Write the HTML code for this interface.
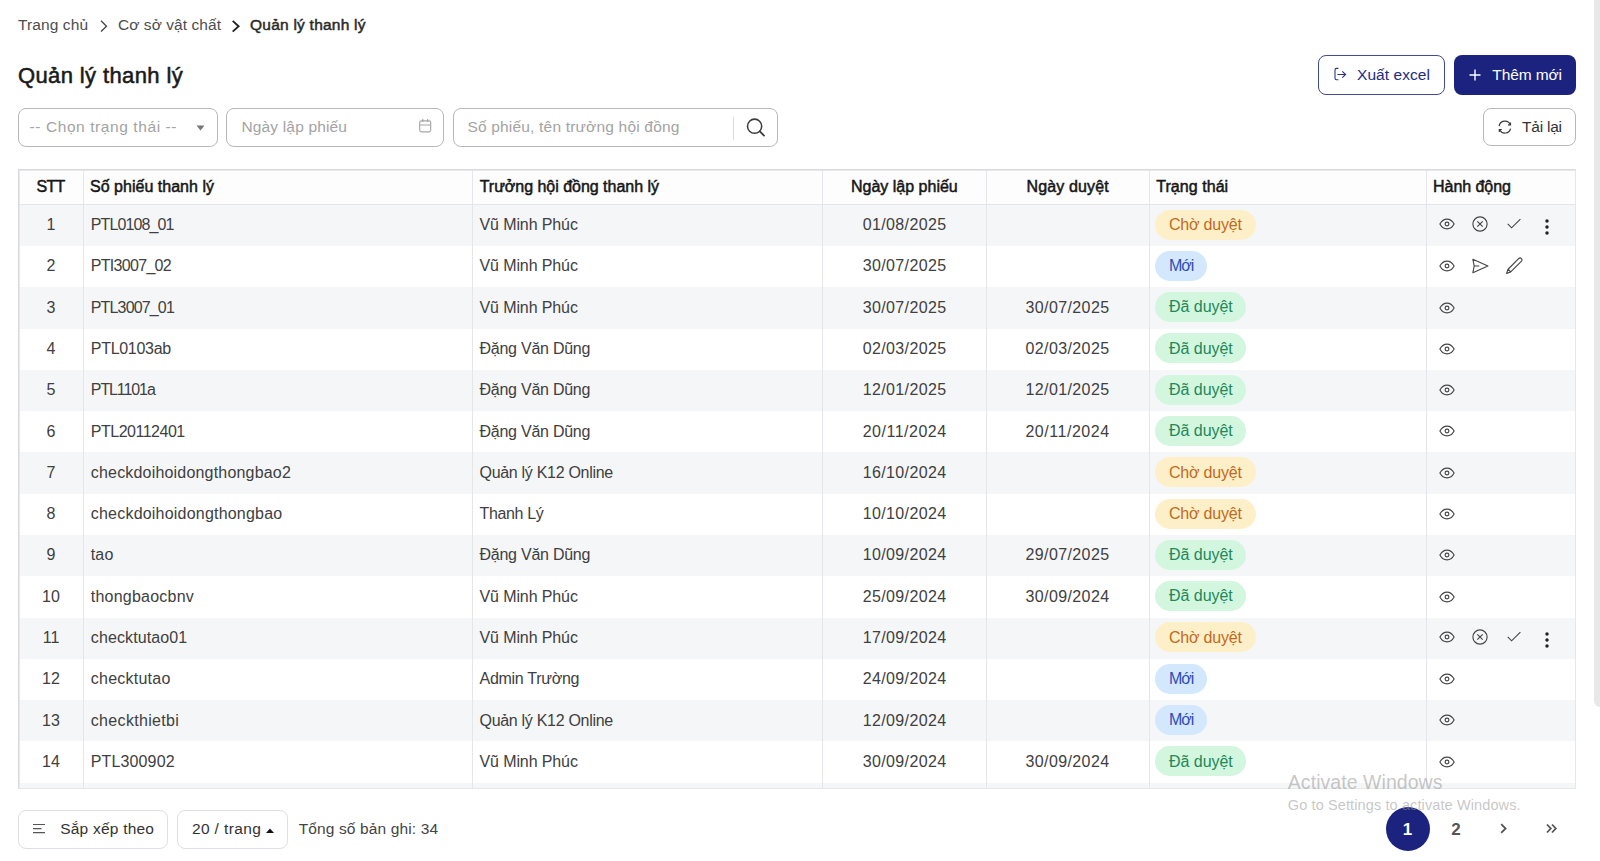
<!DOCTYPE html>
<html><head><meta charset="utf-8">
<style>
*{box-sizing:border-box;margin:0;padding:0}
html,body{width:1600px;height:861px;overflow:hidden;background:#fff;font-family:"Liberation Sans",sans-serif;color:#333}
.t{position:absolute;white-space:nowrap;line-height:1}
.btn{position:absolute;border-radius:8px}
.inp{position:absolute;top:108px;height:39px;border:1px solid #b8b8b8;border-radius:8px}
.ic{position:absolute}
.badge{position:absolute;height:30px;border-radius:15px}
</style></head><body>

<div class="t" style="left:18.00px;top:17.48px;font-size:15.5px;color:#4d4d4d;font-weight:normal;letter-spacing:0.100px;">Trang chủ</div>
<svg class="ic" style="left:99px;top:19px" width="10" height="14" viewBox="0 0 10 14"><path d="M2 1.8L7.5 7.3L2 12.4" fill="none" stroke="#444" stroke-width="1.3"/></svg>
<div class="t" style="left:118.00px;top:17.48px;font-size:15.5px;color:#4d4d4d;font-weight:normal;letter-spacing:0.065px;">Cơ sở vật chất</div>
<svg class="ic" style="left:230px;top:19px" width="11" height="14" viewBox="0 0 11 14"><path d="M2.7 1.9L8.6 7.3L2.7 12.6" fill="none" stroke="#222" stroke-width="1.9"/></svg>
<div class="t" style="left:250.00px;top:17.48px;font-size:15.5px;color:#2a2a2a;font-weight:normal;letter-spacing:0.233px;-webkit-text-stroke:0.5px #2a2a2a;">Quản lý thanh lý</div>
<div class="t" style="left:18.00px;top:64.88px;font-size:22px;color:#1a1a1a;font-weight:normal;letter-spacing:0.380px;-webkit-text-stroke:0.55px #1a1a1a;">Quản lý thanh lý</div>
<div class="btn" style="left:1318px;top:55px;width:127px;height:40px;border:1.3px solid #404a96"></div>
<svg class="ic" style="left:1330px;top:64px" width="20" height="20" viewBox="0 0 20 20"><path d="M8.4 4.4H6.6Q5 4.4 5 6V14.2Q5 15.8 6.6 15.8H8.4" fill="none" stroke="#2a3585" stroke-width="1.1"/><path d="M7.4 10.5H15.4M12.3 7.3L15.6 10.5L12.3 13.7" fill="none" stroke="#2a3585" stroke-width="1.1"/></svg>
<div class="t" style="left:1357.00px;top:66.68px;font-size:15.5px;color:#222b7d;font-weight:normal;letter-spacing:0.067px;">Xuất excel</div>
<div class="btn" style="left:1454px;top:55px;width:122px;height:40px;background:#1b237e"></div>
<svg class="ic" style="left:1469px;top:69px" width="12" height="12" viewBox="0 0 12 12"><path d="M6 0.5V11.5M0.5 6H11.5" stroke="#fff" stroke-width="1.4"/></svg>
<div class="t" style="left:1492.30px;top:66.68px;font-size:15.5px;color:#fff;font-weight:normal;letter-spacing:-0.107px;">Thêm mới</div>
<div class="inp" style="left:18px;width:200px"></div>
<div class="t" style="left:29.50px;top:119.48px;font-size:15.5px;color:#a3a3a3;font-weight:normal;letter-spacing:0.588px;">-- Chọn trạng thái --</div>
<svg class="ic" style="left:196px;top:125px" width="9" height="6" viewBox="0 0 9 6"><path d="M0.5 0.5H8.5L4.5 5.5Z" fill="#777"/></svg>
<div class="inp" style="left:226px;width:218px"></div>
<div class="t" style="left:241.40px;top:119.48px;font-size:15.5px;color:#a3a3a3;font-weight:normal;letter-spacing:0.169px;">Ngày lập phiếu</div>
<svg class="ic" style="left:418px;top:118px" width="14" height="15" viewBox="0 0 14 15"><rect x="1.7" y="2.8" width="11" height="11.1" rx="1.8" fill="none" stroke="#a6a6a6" stroke-width="1.15"/><path d="M1.7 7H12.7M4.8 1V4M9.6 1V4" stroke="#a6a6a6" stroke-width="1.15"/></svg>
<div class="inp" style="left:453px;width:325px"></div>
<div class="t" style="left:467.40px;top:119.48px;font-size:15.5px;color:#a3a3a3;font-weight:normal;letter-spacing:0.189px;">Số phiếu, tên trưởng hội đồng</div>
<div style="position:absolute;left:733px;top:117px;width:1px;height:23px;background:#d9dce4"></div>
<svg class="ic" style="left:745px;top:117px" width="22" height="22" viewBox="0 0 22 22"><circle cx="9.6" cy="9.2" r="7.1" fill="none" stroke="#3d3d3d" stroke-width="1.55"/><path d="M14.8 14.4L19 18.6" stroke="#3d3d3d" stroke-width="1.8" stroke-linecap="round"/></svg>
<div class="btn" style="left:1483px;top:108px;width:93px;height:38px;border:1px solid #b8b8b8"></div>
<svg class="ic" style="left:1494px;top:117px" width="22" height="20" viewBox="0 0 22 20"><path d="M5.1 9.2A5.9 5.9 0 0 1 16.3 7.6" fill="none" stroke="#3a3a3a" stroke-width="1.2"/><path d="M16.6 11.6A5.9 5.9 0 0 1 5.6 12.8" fill="none" stroke="#3a3a3a" stroke-width="1.2"/><path d="M16.5 5.4V7.9H14" fill="none" stroke="#3a3a3a" stroke-width="1.2"/><path d="M5.3 15V12.5H7.8" fill="none" stroke="#3a3a3a" stroke-width="1.2"/></svg>
<div class="t" style="left:1522.00px;top:119.08px;font-size:15.5px;color:#333;font-weight:normal;letter-spacing:-0.225px;">Tải lại</div>
<div style="position:absolute;left:18px;top:169px;width:1558px;height:620px;border:1px solid #e6e7ec;border-top-color:#d9d9db;border-left-color:#d9d9db;background:#fff;overflow:hidden">
<div style="position:absolute;left:0;top:0;width:1556px;height:34px;background:#fdfdfe"></div>
<div style="position:absolute;left:0;top:0;width:1556px;height:1px;background:#e6e8ec"></div>
<div style="position:absolute;left:0;top:34.700px;width:1556px;height:41.290px;background:#f5f6f8"></div>
<div style="position:absolute;left:0;top:117.280px;width:1556px;height:41.290px;background:#f5f6f8"></div>
<div style="position:absolute;left:0;top:199.860px;width:1556px;height:41.290px;background:#f5f6f8"></div>
<div style="position:absolute;left:0;top:282.440px;width:1556px;height:41.290px;background:#f5f6f8"></div>
<div style="position:absolute;left:0;top:365.020px;width:1556px;height:41.290px;background:#f5f6f8"></div>
<div style="position:absolute;left:0;top:447.600px;width:1556px;height:41.290px;background:#f5f6f8"></div>
<div style="position:absolute;left:0;top:530.180px;width:1556px;height:41.290px;background:#f5f6f8"></div>
<div style="position:absolute;left:0;top:612.760px;width:1556px;height:41.290px;background:#f5f6f8"></div>
<div style="position:absolute;left:0;top:34px;width:1556px;height:1px;background:#e4e6eb"></div>
<div style="position:absolute;left:0;top:0;width:1px;height:620px;background:#e6e8ec"></div>
<div style="position:absolute;left:64px;top:0;width:1px;height:620px;background:#e4e6eb"></div>
<div style="position:absolute;left:453px;top:0;width:1px;height:620px;background:#e4e6eb"></div>
<div style="position:absolute;left:803px;top:0;width:1px;height:620px;background:#e4e6eb"></div>
<div style="position:absolute;left:967px;top:0;width:1px;height:620px;background:#e4e6eb"></div>
<div style="position:absolute;left:1130px;top:0;width:1px;height:620px;background:#e4e6eb"></div>
<div style="position:absolute;left:1407px;top:0;width:1px;height:620px;background:#e4e6eb"></div>
</div>
<div class="t" style="left:36.50px;top:178.86px;font-size:16px;color:#161616;font-weight:normal;letter-spacing:-0.750px;-webkit-text-stroke:0.5px #161616;">STT</div>
<div class="t" style="left:90.00px;top:178.86px;font-size:16px;color:#161616;font-weight:normal;letter-spacing:0.022px;-webkit-text-stroke:0.5px #161616;">Số phiếu thanh lý</div>
<div class="t" style="left:479.70px;top:178.86px;font-size:16px;color:#161616;font-weight:normal;letter-spacing:-0.024px;-webkit-text-stroke:0.5px #161616;">Trưởng hội đồng thanh lý</div>
<div class="t" style="left:851.00px;top:178.86px;font-size:16px;color:#161616;font-weight:normal;letter-spacing:0.000px;-webkit-text-stroke:0.5px #161616;">Ngày lập phiếu</div>
<div class="t" style="left:1026.50px;top:178.86px;font-size:16px;color:#161616;font-weight:normal;letter-spacing:0.139px;-webkit-text-stroke:0.5px #161616;">Ngày duyệt</div>
<div class="t" style="left:1156.25px;top:178.86px;font-size:16px;color:#161616;font-weight:normal;letter-spacing:0.050px;-webkit-text-stroke:0.5px #161616;">Trạng thái</div>
<div class="t" style="left:1433.00px;top:178.86px;font-size:16px;color:#161616;font-weight:normal;letter-spacing:-0.037px;-webkit-text-stroke:0.5px #161616;">Hành động</div>
<div class="t" style="left:46.55px;top:217.15px;font-size:16px;color:#404040;font-weight:normal;">1</div>
<div class="t" style="left:90.80px;top:217.15px;font-size:16px;color:#404040;font-weight:normal;letter-spacing:-0.906px;">PTL0108_01</div>
<div class="t" style="left:479.50px;top:217.15px;font-size:16px;color:#404040;font-weight:normal;letter-spacing:-0.109px;">Vũ Minh Phúc</div>
<div class="t" style="left:862.65px;top:217.15px;font-size:16px;color:#404040;font-weight:normal;letter-spacing:0.378px;">01/08/2025</div>
<div class="badge" style="left:1155px;top:209.59px;width:101px;background:#fdf0c8"></div>
<div class="t" style="left:1169.00px;top:216.80px;font-size:16px;color:#c2691c;font-weight:normal;letter-spacing:-0.194px;">Chờ duyệt</div>
<svg class="ic" style="left:1437.20px;top:213.65px" width="20" height="20" viewBox="0 0 20 20"><path d="M2.9 10C4.6 6.9 7 5.1 10 5.1S15.4 6.9 17.1 10C15.4 13.1 13 14.9 10 14.9S4.6 13.1 2.9 10Z" fill="none" stroke="#454545" stroke-width="1.15"/><circle cx="10" cy="10" r="1.9" fill="none" stroke="#454545" stroke-width="1.15"/></svg>
<svg class="ic" style="left:1470.00px;top:213.65px" width="20" height="20" viewBox="0 0 20 20"><circle cx="10" cy="10" r="7.1" fill="none" stroke="#454545" stroke-width="1.15"/><path d="M7.3 7.3L12.7 12.7M12.7 7.3L7.3 12.7" stroke="#454545" stroke-width="1.15"/></svg>
<svg class="ic" style="left:1504.00px;top:213.65px" width="20" height="20" viewBox="0 0 20 20"><path d="M3.7 9.9L7.6 13.8L16.4 5.1" fill="none" stroke="#454545" stroke-width="1.15"/></svg>
<svg class="ic" style="left:1537.30px;top:216.75px" width="20" height="20" viewBox="0 0 20 20"><circle cx="10" cy="4.1" r="1.75" fill="#222"/><circle cx="10" cy="10" r="1.75" fill="#222"/><circle cx="10" cy="15.9" r="1.75" fill="#222"/></svg>
<div class="t" style="left:46.55px;top:258.44px;font-size:16px;color:#404040;font-weight:normal;">2</div>
<div class="t" style="left:90.80px;top:258.44px;font-size:16px;color:#404040;font-weight:normal;letter-spacing:-0.700px;">PTI3007_02</div>
<div class="t" style="left:479.50px;top:258.44px;font-size:16px;color:#404040;font-weight:normal;letter-spacing:-0.109px;">Vũ Minh Phúc</div>
<div class="t" style="left:862.65px;top:258.44px;font-size:16px;color:#404040;font-weight:normal;letter-spacing:0.378px;">30/07/2025</div>
<div class="badge" style="left:1155px;top:250.88px;width:52px;background:#d3e8fd"></div>
<div class="t" style="left:1169.00px;top:258.09px;font-size:16px;color:#2f4db5;font-weight:normal;letter-spacing:-1.000px;">Mới</div>
<svg class="ic" style="left:1437.20px;top:256.03px" width="20" height="20" viewBox="0 0 20 20"><path d="M2.9 10C4.6 6.9 7 5.1 10 5.1S15.4 6.9 17.1 10C15.4 13.1 13 14.9 10 14.9S4.6 13.1 2.9 10Z" fill="none" stroke="#454545" stroke-width="1.15"/><circle cx="10" cy="10" r="1.9" fill="none" stroke="#454545" stroke-width="1.15"/></svg>
<svg class="ic" style="left:1470.20px;top:256.03px" width="20" height="20" viewBox="0 0 20 20"><path d="M2.9 3.3L17.9 10L2.9 16.7L4.2 10Z M4.2 10H9.3" fill="none" stroke="#454545" stroke-width="1.15" stroke-linejoin="round"/></svg>
<svg class="ic" style="left:1504.20px;top:256.03px" width="20" height="20" viewBox="0 0 20 20"><path d="M2.6 17.4L4.06 13.26L14.86 2.46A1.9 1.9 0 0 1 17.54 5.14L6.74 15.94Z M4.06 13.26L6.74 15.94" fill="none" stroke="#454545" stroke-width="1.15" stroke-linejoin="round"/></svg>
<div class="t" style="left:46.55px;top:299.73px;font-size:16px;color:#404040;font-weight:normal;">3</div>
<div class="t" style="left:90.80px;top:299.73px;font-size:16px;color:#404040;font-weight:normal;letter-spacing:-0.850px;">PTL3007_01</div>
<div class="t" style="left:479.50px;top:299.73px;font-size:16px;color:#404040;font-weight:normal;letter-spacing:-0.109px;">Vũ Minh Phúc</div>
<div class="t" style="left:862.65px;top:299.73px;font-size:16px;color:#404040;font-weight:normal;letter-spacing:0.378px;">30/07/2025</div>
<div class="t" style="left:1025.45px;top:299.73px;font-size:16px;color:#404040;font-weight:normal;letter-spacing:0.400px;">30/07/2025</div>
<div class="badge" style="left:1155px;top:292.17px;width:91px;background:#d2f7de"></div>
<div class="t" style="left:1169.00px;top:299.38px;font-size:16px;color:#23875a;font-weight:normal;letter-spacing:-0.036px;">Đã duyệt</div>
<svg class="ic" style="left:1437.20px;top:297.52px" width="20" height="20" viewBox="0 0 20 20"><path d="M2.9 10C4.6 6.9 7 5.1 10 5.1S15.4 6.9 17.1 10C15.4 13.1 13 14.9 10 14.9S4.6 13.1 2.9 10Z" fill="none" stroke="#454545" stroke-width="1.15"/><circle cx="10" cy="10" r="1.9" fill="none" stroke="#454545" stroke-width="1.15"/></svg>
<div class="t" style="left:46.55px;top:341.02px;font-size:16px;color:#404040;font-weight:normal;">4</div>
<div class="t" style="left:90.80px;top:341.02px;font-size:16px;color:#404040;font-weight:normal;letter-spacing:-0.294px;">PTL0103ab</div>
<div class="t" style="left:479.50px;top:341.02px;font-size:16px;color:#404040;font-weight:normal;letter-spacing:-0.246px;">Đặng Văn Dũng</div>
<div class="t" style="left:862.65px;top:341.02px;font-size:16px;color:#404040;font-weight:normal;letter-spacing:0.378px;">02/03/2025</div>
<div class="t" style="left:1025.45px;top:341.02px;font-size:16px;color:#404040;font-weight:normal;letter-spacing:0.400px;">02/03/2025</div>
<div class="badge" style="left:1155px;top:333.46px;width:91px;background:#d2f7de"></div>
<div class="t" style="left:1169.00px;top:340.67px;font-size:16px;color:#23875a;font-weight:normal;letter-spacing:-0.036px;">Đã duyệt</div>
<svg class="ic" style="left:1437.20px;top:338.81px" width="20" height="20" viewBox="0 0 20 20"><path d="M2.9 10C4.6 6.9 7 5.1 10 5.1S15.4 6.9 17.1 10C15.4 13.1 13 14.9 10 14.9S4.6 13.1 2.9 10Z" fill="none" stroke="#454545" stroke-width="1.15"/><circle cx="10" cy="10" r="1.9" fill="none" stroke="#454545" stroke-width="1.15"/></svg>
<div class="t" style="left:46.55px;top:382.31px;font-size:16px;color:#404040;font-weight:normal;">5</div>
<div class="t" style="left:90.80px;top:382.31px;font-size:16px;color:#404040;font-weight:normal;letter-spacing:-1.093px;">PTL1101a</div>
<div class="t" style="left:479.50px;top:382.31px;font-size:16px;color:#404040;font-weight:normal;letter-spacing:-0.246px;">Đặng Văn Dũng</div>
<div class="t" style="left:862.65px;top:382.31px;font-size:16px;color:#404040;font-weight:normal;letter-spacing:0.378px;">12/01/2025</div>
<div class="t" style="left:1025.45px;top:382.31px;font-size:16px;color:#404040;font-weight:normal;letter-spacing:0.400px;">12/01/2025</div>
<div class="badge" style="left:1155px;top:374.75px;width:91px;background:#d2f7de"></div>
<div class="t" style="left:1169.00px;top:381.96px;font-size:16px;color:#23875a;font-weight:normal;letter-spacing:-0.036px;">Đã duyệt</div>
<svg class="ic" style="left:1437.20px;top:380.11px" width="20" height="20" viewBox="0 0 20 20"><path d="M2.9 10C4.6 6.9 7 5.1 10 5.1S15.4 6.9 17.1 10C15.4 13.1 13 14.9 10 14.9S4.6 13.1 2.9 10Z" fill="none" stroke="#454545" stroke-width="1.15"/><circle cx="10" cy="10" r="1.9" fill="none" stroke="#454545" stroke-width="1.15"/></svg>
<div class="t" style="left:46.55px;top:423.60px;font-size:16px;color:#404040;font-weight:normal;">6</div>
<div class="t" style="left:90.80px;top:423.60px;font-size:16px;color:#404040;font-weight:normal;letter-spacing:-0.495px;">PTL20112401</div>
<div class="t" style="left:479.50px;top:423.60px;font-size:16px;color:#404040;font-weight:normal;letter-spacing:-0.246px;">Đặng Văn Dũng</div>
<div class="t" style="left:862.65px;top:423.60px;font-size:16px;color:#404040;font-weight:normal;letter-spacing:0.511px;">20/11/2024</div>
<div class="t" style="left:1025.45px;top:423.60px;font-size:16px;color:#404040;font-weight:normal;letter-spacing:0.533px;">20/11/2024</div>
<div class="badge" style="left:1155px;top:416.04px;width:91px;background:#d2f7de"></div>
<div class="t" style="left:1169.00px;top:423.25px;font-size:16px;color:#23875a;font-weight:normal;letter-spacing:-0.036px;">Đã duyệt</div>
<svg class="ic" style="left:1437.20px;top:421.39px" width="20" height="20" viewBox="0 0 20 20"><path d="M2.9 10C4.6 6.9 7 5.1 10 5.1S15.4 6.9 17.1 10C15.4 13.1 13 14.9 10 14.9S4.6 13.1 2.9 10Z" fill="none" stroke="#454545" stroke-width="1.15"/><circle cx="10" cy="10" r="1.9" fill="none" stroke="#454545" stroke-width="1.15"/></svg>
<div class="t" style="left:46.55px;top:464.89px;font-size:16px;color:#404040;font-weight:normal;">7</div>
<div class="t" style="left:90.80px;top:464.89px;font-size:16px;color:#404040;font-weight:normal;letter-spacing:0.185px;">checkdoihoidongthongbao2</div>
<div class="t" style="left:479.50px;top:464.89px;font-size:16px;color:#404040;font-weight:normal;letter-spacing:-0.297px;">Quản lý K12 Online</div>
<div class="t" style="left:862.65px;top:464.89px;font-size:16px;color:#404040;font-weight:normal;letter-spacing:0.378px;">16/10/2024</div>
<div class="badge" style="left:1155px;top:457.33px;width:101px;background:#fdf0c8"></div>
<div class="t" style="left:1169.00px;top:464.54px;font-size:16px;color:#c2691c;font-weight:normal;letter-spacing:-0.194px;">Chờ duyệt</div>
<svg class="ic" style="left:1437.20px;top:462.69px" width="20" height="20" viewBox="0 0 20 20"><path d="M2.9 10C4.6 6.9 7 5.1 10 5.1S15.4 6.9 17.1 10C15.4 13.1 13 14.9 10 14.9S4.6 13.1 2.9 10Z" fill="none" stroke="#454545" stroke-width="1.15"/><circle cx="10" cy="10" r="1.9" fill="none" stroke="#454545" stroke-width="1.15"/></svg>
<div class="t" style="left:46.55px;top:506.18px;font-size:16px;color:#404040;font-weight:normal;">8</div>
<div class="t" style="left:90.80px;top:506.18px;font-size:16px;color:#404040;font-weight:normal;letter-spacing:0.207px;">checkdoihoidongthongbao</div>
<div class="t" style="left:479.50px;top:506.18px;font-size:16px;color:#404040;font-weight:normal;letter-spacing:-0.357px;">Thanh Lý</div>
<div class="t" style="left:862.65px;top:506.18px;font-size:16px;color:#404040;font-weight:normal;letter-spacing:0.378px;">10/10/2024</div>
<div class="badge" style="left:1155px;top:498.62px;width:101px;background:#fdf0c8"></div>
<div class="t" style="left:1169.00px;top:505.83px;font-size:16px;color:#c2691c;font-weight:normal;letter-spacing:-0.194px;">Chờ duyệt</div>
<svg class="ic" style="left:1437.20px;top:503.98px" width="20" height="20" viewBox="0 0 20 20"><path d="M2.9 10C4.6 6.9 7 5.1 10 5.1S15.4 6.9 17.1 10C15.4 13.1 13 14.9 10 14.9S4.6 13.1 2.9 10Z" fill="none" stroke="#454545" stroke-width="1.15"/><circle cx="10" cy="10" r="1.9" fill="none" stroke="#454545" stroke-width="1.15"/></svg>
<div class="t" style="left:46.55px;top:547.47px;font-size:16px;color:#404040;font-weight:normal;">9</div>
<div class="t" style="left:90.80px;top:547.47px;font-size:16px;color:#404040;font-weight:normal;letter-spacing:0.125px;">tao</div>
<div class="t" style="left:479.50px;top:547.47px;font-size:16px;color:#404040;font-weight:normal;letter-spacing:-0.246px;">Đặng Văn Dũng</div>
<div class="t" style="left:862.65px;top:547.47px;font-size:16px;color:#404040;font-weight:normal;letter-spacing:0.378px;">10/09/2024</div>
<div class="t" style="left:1025.45px;top:547.47px;font-size:16px;color:#404040;font-weight:normal;letter-spacing:0.400px;">29/07/2025</div>
<div class="badge" style="left:1155px;top:539.91px;width:91px;background:#d2f7de"></div>
<div class="t" style="left:1169.00px;top:547.12px;font-size:16px;color:#23875a;font-weight:normal;letter-spacing:-0.036px;">Đã duyệt</div>
<svg class="ic" style="left:1437.20px;top:545.26px" width="20" height="20" viewBox="0 0 20 20"><path d="M2.9 10C4.6 6.9 7 5.1 10 5.1S15.4 6.9 17.1 10C15.4 13.1 13 14.9 10 14.9S4.6 13.1 2.9 10Z" fill="none" stroke="#454545" stroke-width="1.15"/><circle cx="10" cy="10" r="1.9" fill="none" stroke="#454545" stroke-width="1.15"/></svg>
<div class="t" style="left:42.10px;top:588.76px;font-size:16px;color:#404040;font-weight:normal;">10</div>
<div class="t" style="left:90.80px;top:588.76px;font-size:16px;color:#404040;font-weight:normal;letter-spacing:0.223px;">thongbaocbnv</div>
<div class="t" style="left:479.50px;top:588.76px;font-size:16px;color:#404040;font-weight:normal;letter-spacing:-0.109px;">Vũ Minh Phúc</div>
<div class="t" style="left:862.65px;top:588.76px;font-size:16px;color:#404040;font-weight:normal;letter-spacing:0.378px;">25/09/2024</div>
<div class="t" style="left:1025.45px;top:588.76px;font-size:16px;color:#404040;font-weight:normal;letter-spacing:0.400px;">30/09/2024</div>
<div class="badge" style="left:1155px;top:581.20px;width:91px;background:#d2f7de"></div>
<div class="t" style="left:1169.00px;top:588.41px;font-size:16px;color:#23875a;font-weight:normal;letter-spacing:-0.036px;">Đã duyệt</div>
<svg class="ic" style="left:1437.20px;top:586.55px" width="20" height="20" viewBox="0 0 20 20"><path d="M2.9 10C4.6 6.9 7 5.1 10 5.1S15.4 6.9 17.1 10C15.4 13.1 13 14.9 10 14.9S4.6 13.1 2.9 10Z" fill="none" stroke="#454545" stroke-width="1.15"/><circle cx="10" cy="10" r="1.9" fill="none" stroke="#454545" stroke-width="1.15"/></svg>
<div class="t" style="left:42.70px;top:630.05px;font-size:16px;color:#404040;font-weight:normal;">11</div>
<div class="t" style="left:90.80px;top:630.05px;font-size:16px;color:#404040;font-weight:normal;letter-spacing:0.109px;">checktutao01</div>
<div class="t" style="left:479.50px;top:630.05px;font-size:16px;color:#404040;font-weight:normal;letter-spacing:-0.109px;">Vũ Minh Phúc</div>
<div class="t" style="left:862.65px;top:630.05px;font-size:16px;color:#404040;font-weight:normal;letter-spacing:0.378px;">17/09/2024</div>
<div class="badge" style="left:1155px;top:622.49px;width:101px;background:#fdf0c8"></div>
<div class="t" style="left:1169.00px;top:629.70px;font-size:16px;color:#c2691c;font-weight:normal;letter-spacing:-0.194px;">Chờ duyệt</div>
<svg class="ic" style="left:1437.20px;top:626.54px" width="20" height="20" viewBox="0 0 20 20"><path d="M2.9 10C4.6 6.9 7 5.1 10 5.1S15.4 6.9 17.1 10C15.4 13.1 13 14.9 10 14.9S4.6 13.1 2.9 10Z" fill="none" stroke="#454545" stroke-width="1.15"/><circle cx="10" cy="10" r="1.9" fill="none" stroke="#454545" stroke-width="1.15"/></svg>
<svg class="ic" style="left:1470.00px;top:626.54px" width="20" height="20" viewBox="0 0 20 20"><circle cx="10" cy="10" r="7.1" fill="none" stroke="#454545" stroke-width="1.15"/><path d="M7.3 7.3L12.7 12.7M12.7 7.3L7.3 12.7" stroke="#454545" stroke-width="1.15"/></svg>
<svg class="ic" style="left:1504.00px;top:626.54px" width="20" height="20" viewBox="0 0 20 20"><path d="M3.7 9.9L7.6 13.8L16.4 5.1" fill="none" stroke="#454545" stroke-width="1.15"/></svg>
<svg class="ic" style="left:1537.30px;top:629.64px" width="20" height="20" viewBox="0 0 20 20"><circle cx="10" cy="4.1" r="1.75" fill="#222"/><circle cx="10" cy="10" r="1.75" fill="#222"/><circle cx="10" cy="15.9" r="1.75" fill="#222"/></svg>
<div class="t" style="left:42.10px;top:671.34px;font-size:16px;color:#404040;font-weight:normal;">12</div>
<div class="t" style="left:90.80px;top:671.34px;font-size:16px;color:#404040;font-weight:normal;letter-spacing:0.233px;">checktutao</div>
<div class="t" style="left:479.50px;top:671.34px;font-size:16px;color:#404040;font-weight:normal;letter-spacing:-0.273px;">Admin Trường</div>
<div class="t" style="left:862.65px;top:671.34px;font-size:16px;color:#404040;font-weight:normal;letter-spacing:0.378px;">24/09/2024</div>
<div class="badge" style="left:1155px;top:663.78px;width:52px;background:#d3e8fd"></div>
<div class="t" style="left:1169.00px;top:670.99px;font-size:16px;color:#2f4db5;font-weight:normal;letter-spacing:-1.000px;">Mới</div>
<svg class="ic" style="left:1437.20px;top:669.13px" width="20" height="20" viewBox="0 0 20 20"><path d="M2.9 10C4.6 6.9 7 5.1 10 5.1S15.4 6.9 17.1 10C15.4 13.1 13 14.9 10 14.9S4.6 13.1 2.9 10Z" fill="none" stroke="#454545" stroke-width="1.15"/><circle cx="10" cy="10" r="1.9" fill="none" stroke="#454545" stroke-width="1.15"/></svg>
<div class="t" style="left:42.10px;top:712.63px;font-size:16px;color:#404040;font-weight:normal;">13</div>
<div class="t" style="left:90.80px;top:712.63px;font-size:16px;color:#404040;font-weight:normal;letter-spacing:0.327px;">checkthietbi</div>
<div class="t" style="left:479.50px;top:712.63px;font-size:16px;color:#404040;font-weight:normal;letter-spacing:-0.297px;">Quản lý K12 Online</div>
<div class="t" style="left:862.65px;top:712.63px;font-size:16px;color:#404040;font-weight:normal;letter-spacing:0.378px;">12/09/2024</div>
<div class="badge" style="left:1155px;top:705.08px;width:52px;background:#d3e8fd"></div>
<div class="t" style="left:1169.00px;top:712.28px;font-size:16px;color:#2f4db5;font-weight:normal;letter-spacing:-1.000px;">Mới</div>
<svg class="ic" style="left:1437.20px;top:710.43px" width="20" height="20" viewBox="0 0 20 20"><path d="M2.9 10C4.6 6.9 7 5.1 10 5.1S15.4 6.9 17.1 10C15.4 13.1 13 14.9 10 14.9S4.6 13.1 2.9 10Z" fill="none" stroke="#454545" stroke-width="1.15"/><circle cx="10" cy="10" r="1.9" fill="none" stroke="#454545" stroke-width="1.15"/></svg>
<div class="t" style="left:42.10px;top:753.92px;font-size:16px;color:#404040;font-weight:normal;">14</div>
<div class="t" style="left:90.80px;top:753.92px;font-size:16px;color:#404040;font-weight:normal;letter-spacing:0.131px;">PTL300902</div>
<div class="t" style="left:479.50px;top:753.92px;font-size:16px;color:#404040;font-weight:normal;letter-spacing:-0.109px;">Vũ Minh Phúc</div>
<div class="t" style="left:862.65px;top:753.92px;font-size:16px;color:#404040;font-weight:normal;letter-spacing:0.378px;">30/09/2024</div>
<div class="t" style="left:1025.45px;top:753.92px;font-size:16px;color:#404040;font-weight:normal;letter-spacing:0.400px;">30/09/2024</div>
<div class="badge" style="left:1155px;top:746.37px;width:91px;background:#d2f7de"></div>
<div class="t" style="left:1169.00px;top:753.57px;font-size:16px;color:#23875a;font-weight:normal;letter-spacing:-0.036px;">Đã duyệt</div>
<svg class="ic" style="left:1437.20px;top:751.72px" width="20" height="20" viewBox="0 0 20 20"><path d="M2.9 10C4.6 6.9 7 5.1 10 5.1S15.4 6.9 17.1 10C15.4 13.1 13 14.9 10 14.9S4.6 13.1 2.9 10Z" fill="none" stroke="#454545" stroke-width="1.15"/><circle cx="10" cy="10" r="1.9" fill="none" stroke="#454545" stroke-width="1.15"/></svg>
<div class="btn" style="left:18px;top:810px;width:150px;height:39px;border:1px solid #dcdfe5"></div>
<svg class="ic" style="left:32px;top:822px" width="14" height="13" viewBox="0 0 14 13"><path d="M1 2.5H13M1 6.7H9.5M1 10.7H13" stroke="#555" stroke-width="1.2"/></svg>
<div class="t" style="left:60.20px;top:821.38px;font-size:15.5px;color:#333;font-weight:normal;letter-spacing:0.223px;">Sắp xếp theo</div>
<div class="btn" style="left:177px;top:810px;width:111px;height:39px;border:1px solid #dcdfe5"></div>
<div class="t" style="left:191.90px;top:821.28px;font-size:15.5px;color:#333;font-weight:normal;letter-spacing:0.389px;">20 / trang</div>
<svg class="ic" style="left:266px;top:828px" width="8" height="5" viewBox="0 0 8 5"><path d="M0 5H8L4 0.5Z" fill="#111"/></svg>
<div class="t" style="left:298.70px;top:821.28px;font-size:15.5px;color:#444;font-weight:normal;letter-spacing:0.128px;">Tổng số bản ghi: 34</div>
<div style="position:absolute;left:1386px;top:807px;width:44px;height:44px;border-radius:22px;background:#1b237e"></div>
<div class="t" style="left:1402.78px;top:820.61px;font-size:17px;color:#fff;font-weight:bold;">1</div>
<div class="t" style="left:1451.28px;top:820.61px;font-size:17px;color:#555;font-weight:bold;">2</div>
<svg class="ic" style="left:1499px;top:823px" width="9" height="11" viewBox="0 0 9 11"><path d="M2.2 1.2L6.6 5.5L2.2 9.8" fill="none" stroke="#555" stroke-width="1.8"/></svg>
<svg class="ic" style="left:1545px;top:823px" width="13" height="11" viewBox="0 0 13 11"><path d="M2 1.5L5.8 5.5L2 9.5M7 1.5L10.8 5.5L7 9.5" fill="none" stroke="#555" stroke-width="1.8"/></svg>
<div class="t" style="left:1287.80px;top:772.99px;font-size:19.5px;color:rgba(150,150,150,0.55);font-weight:normal;letter-spacing:0.053px;">Activate Windows</div>
<div class="t" style="left:1287.80px;top:798.33px;font-size:14.5px;color:rgba(150,150,150,0.55);font-weight:normal;letter-spacing:0.115px;">Go to Settings to activate Windows.</div>
<div style="position:absolute;left:1594px;top:0;width:6px;height:707px;background:#e8e8e8;border-radius:0 0 0 6px"></div>
</body></html>
